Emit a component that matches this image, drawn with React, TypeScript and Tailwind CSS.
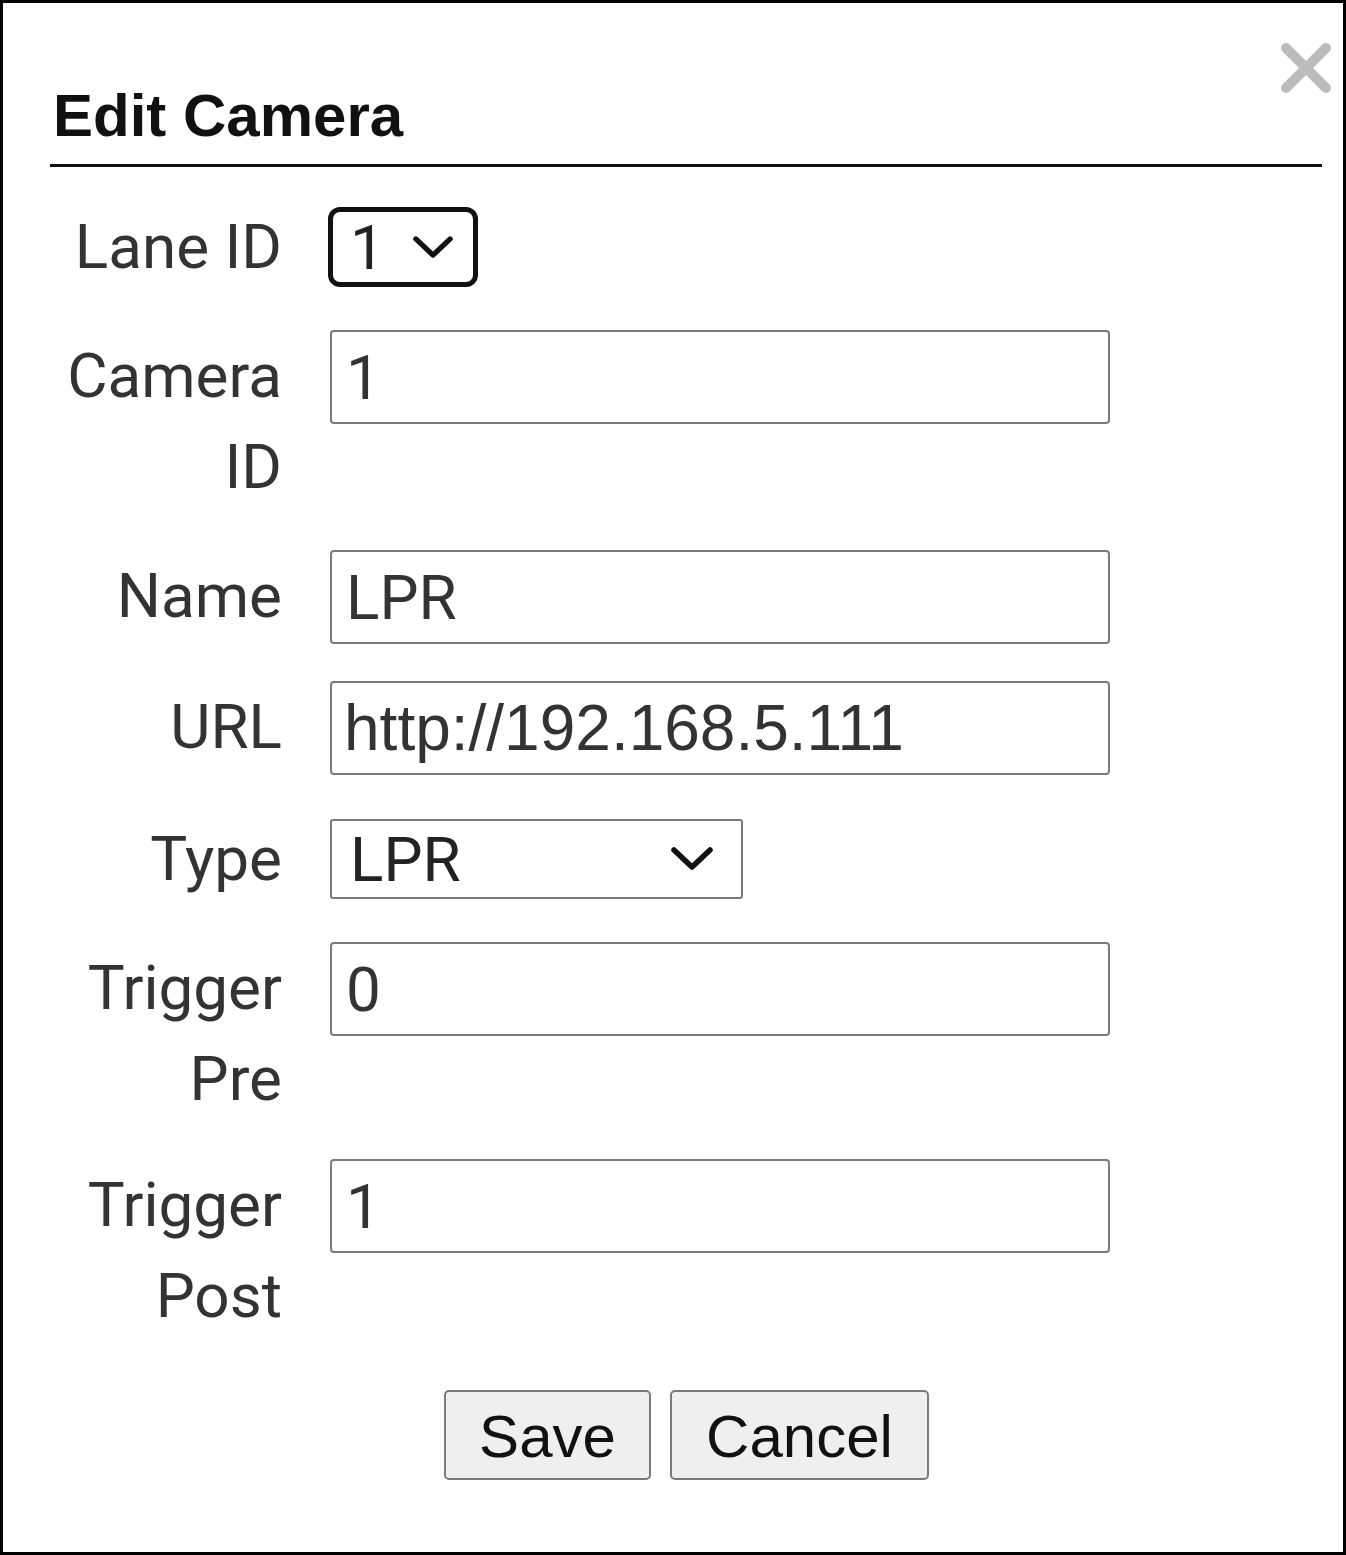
import React from "react";

const labelCls =
  "w-[232px] shrink-0 text-right text-[62px] leading-[91px] text-[#333] font-['Roboto',sans-serif]";

function Chevron({ w, h }: { w: number; h: number }) {
  return (
    <svg width={w} height={h} viewBox="0 0 42 24" fill="none">
      <path d="M3 3 L21 20 L39 3" stroke="#111" strokeWidth="5.5" strokeLinecap="round" strokeLinejoin="round" />
    </svg>
  );
}

function TextBox({ value, url }: { value: string; url?: boolean }) {
  return (
    <div
      className={
        "w-[780px] h-[94px] shrink-0 border-2 border-[#7a7a7a] rounded-[4px] bg-white flex items-center text-[#333] " +
        (url
          ? "pl-[12px] text-[64px] font-['Liberation_Sans',Arial,sans-serif]"
          : "pl-[14px] text-[62px] font-['Roboto',sans-serif]")
      }
    >
      {value}
    </div>
  );
}

export default function App() {
  return (
    <div className="w-[1346px] h-[1555px] border-[3px] border-black bg-white relative box-border">
      <button className="absolute left-[1275px] top-[37px] w-[56px] h-[56px] flex items-center justify-center">
        <svg width="52" height="52" viewBox="0 0 52 52">
          <path d="M6 6 L46 46 M46 6 L6 46" stroke="#bcbcbc" strokeWidth="10" strokeLinecap="round" />
        </svg>
      </button>
      <div className="pl-[47px] pr-[21px]">
        <h1 className="mt-[78px] pl-[3px] text-[60px] leading-[69px] font-bold text-[#111] font-['Liberation_Sans',Arial,sans-serif]">
          Edit Camera
        </h1>
        <div className="mt-[14px] h-[3px] bg-[#111]" />
        <div className="mt-[34px] flex flex-col">
          <div className="flex items-start gap-[46px]">
            <div className={labelCls}>Lane ID</div>
            <div className="mt-[6px] w-[150px] h-[80px] border-[5px] border-[#111] rounded-[12px] flex items-center pl-[17px] pr-[20px] justify-between text-[62px] text-[#222] font-['Roboto',sans-serif]">
              <span>1</span>
              <Chevron w={40} h={23} />
            </div>
          </div>
          <div className="mt-[38px] flex items-start gap-[48px]">
            <div className={labelCls}>Camera ID</div>
            <TextBox value="1" />
          </div>
          <div className="mt-[38px] flex items-start gap-[48px]">
            <div className={labelCls}>Name</div>
            <TextBox value="LPR" />
          </div>
          <div className="mt-[37px] flex items-start gap-[48px]">
            <div className={labelCls}>URL</div>
            <TextBox value="http://192.168.5.111" url />
          </div>
          <div className="mt-[38px] flex items-start gap-[48px]">
            <div className={labelCls}>Type</div>
            <div className="mt-[6px] w-[413px] h-[80px] border-2 border-[#7a7a7a] rounded-[3px] flex items-center justify-between pl-[18px] pr-[28px] text-[62px] text-[#222] font-['Roboto',sans-serif]">
              <span>LPR</span>
              <Chevron w={42} h={24} />
            </div>
          </div>
          <div className="mt-[38px] flex items-start gap-[48px]">
            <div className={labelCls}>Trigger Pre</div>
            <TextBox value="0" />
          </div>
          <div className="mt-[35px] flex items-start gap-[48px]">
            <div className={labelCls}>Trigger Post</div>
            <TextBox value="1" />
          </div>
        </div>
        <div className="mt-[49px] flex justify-center gap-[19px] pl-[1px]">
          <button className="h-[90px] w-[207px] border-2 border-[#7a7a7a] rounded-[5px] bg-[#efefef] text-[60px] text-[#111] font-['Liberation_Sans',Arial,sans-serif]">
            Save
          </button>
          <button className="h-[90px] w-[259px] border-2 border-[#7a7a7a] rounded-[5px] bg-[#efefef] text-[60px] text-[#111] font-['Liberation_Sans',Arial,sans-serif]">
            Cancel
          </button>
        </div>
      </div>
    </div>
  );
}
